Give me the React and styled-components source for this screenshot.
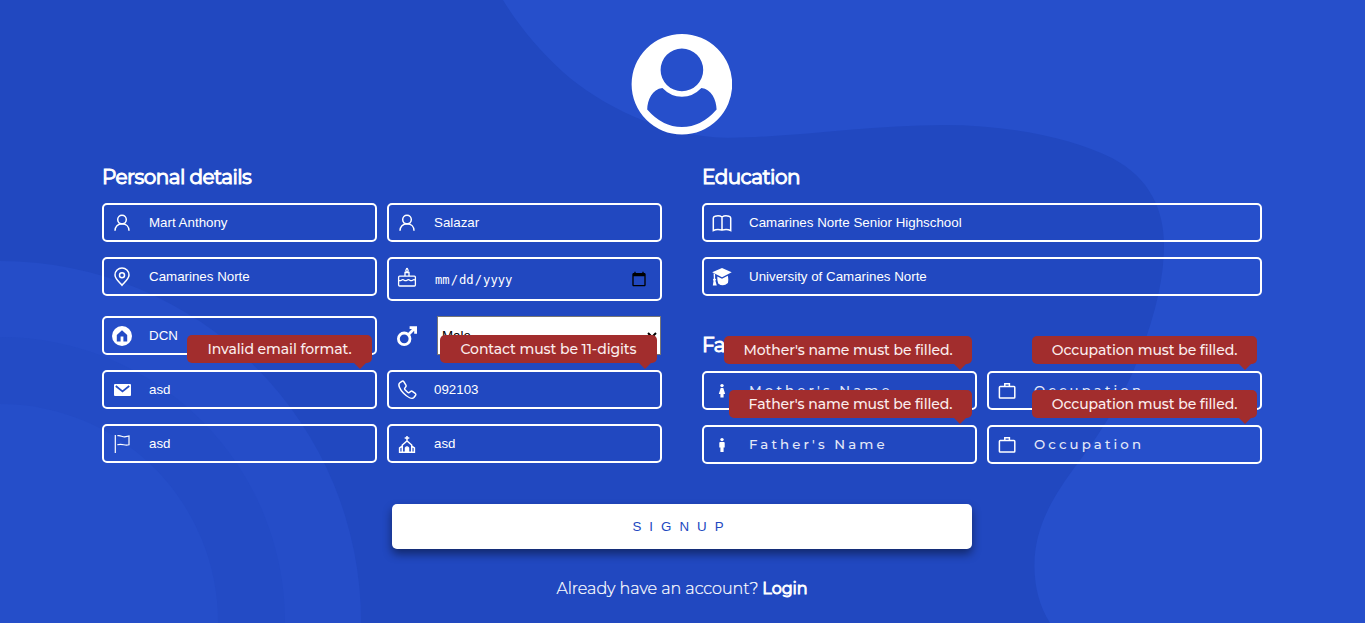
import React from "react";
import styled, { createGlobalStyle } from "styled-components";

const DISPLAY = `Montserrat, Inter, "Open Sans", sans-serif`;
const BODY = `"Liberation Sans", Arial, sans-serif`;

const GlobalStyle = createGlobalStyle`
  *, *::before, *::after { box-sizing: border-box; }
  html, body { margin: 0; padding: 0; background: #2148c0; }
  body { overflow: hidden; }
`;

const Page = styled.main`
  position: relative;
  isolation: isolate;
  height: 623px;
  padding: 34px 0 0 102px;
  overflow: hidden;
  color: #fff;
  font-family: ${DISPLAY};
`;

const Backdrop = styled.svg`
  position: absolute;
  inset: 0;
  z-index: -1;
`;

const Content = styled.form`
  display: flex;
  flex-direction: column;
  align-items: center;
  width: 1160px;
`;

const Avatar = styled.svg`
  display: block;
  width: 101px;
  height: 101px;
  margin-right: 1px;
`;

const Columns = styled.div`
  display: grid;
  grid-template-columns: 560px 560px;
  gap: 40px;
  align-self: stretch;
  margin-top: 28px;
`;

const Column = styled.section`
  display: flex;
  flex-direction: column;
`;

const Heading = styled.h2`
  margin: 0 0 13px;
  height: 27px;
  font-size: 20px;
  line-height: 28px;
  font-weight: 400;
  letter-spacing: -0.55px;
  -webkit-text-stroke: 1px #fff;
`;

const Rows = styled.div`
  display: flex;
  flex-direction: column;
  gap: 15px;
  margin-bottom: ${(p) => p.$below || 0}px;
`;

const Row = styled.div`
  display: grid;
  grid-auto-flow: column;
  grid-auto-columns: minmax(0, 1fr);
  align-items: start;
  gap: 10px;
`;

const Field = styled.label`
  position: relative;
  display: flex;
  gap: ${(p) => (p.$bare ? 20 : 17)}px;
  height: ${(p) => p.$height || 39}px;
  padding: 0 ${(p) => (p.$bare ? 0 : 8)}px 0 ${(p) => (p.$bare ? 10 : 8)}px;
  border: ${(p) => (p.$bare ? "0" : "2px solid #fff")};
  border-radius: 5px;
`;

const Icon = styled.svg`
  flex: none;
  width: 20px;
  height: 20px;
  margin-top: ${(p) => p.$top ?? 8}px;
  overflow: visible;
  fill: none;
  stroke: #fff;
  stroke-width: 1.5;
`;

const Input = styled.input`
  flex: 1;
  min-width: 0;
  height: 35px;
  padding: 0;
  border: 0;
  outline: 0;
  background: transparent;
  color: #fff;
  font: 13.333px ${BODY};
  &::placeholder {
    color: #e4e9f8;
    opacity: 1;
    font-family: ${DISPLAY};
    font-size: 13.333px;
    font-weight: 500;
    letter-spacing: 3.1px;
  }
`;

const DateInput = styled(Input)`
  height: 40px;
  padding: 2px 5px 0 0;
  font: 12.2px "DejaVu Sans Mono", monospace;
  &::-webkit-calendar-picker-indicator {
    width: 16px;
    height: 16px;
    margin-bottom: 2px;
    padding: 0;
    background-size: 16px 16px;
  }
`;

const Select = styled.select`
  flex: 1;
  height: 39px;
  margin-right: 1px;
  border-radius: 0;
  background: #fff;
  color: #000;
  font: 13.333px ${BODY};
`;

const Tooltip = styled.span`
  position: absolute;
  z-index: 2;
  right: 3px;
  top: -37px;
  width: ${(p) => p.$width}px;
  height: 28px;
  border-radius: 5px;
  background: #a22d2d;
  color: #fbeeee;
  font-size: 14px;
  line-height: 28px;
  font-weight: 500;
  letter-spacing: -0.08px;
  text-align: center;
  white-space: nowrap;
  &::after {
    content: "";
    position: absolute;
    right: 6px;
    top: 28px;
    border: 6px solid transparent;
    border-bottom: 0;
    border-top-color: #a22d2d;
  }
`;

const Submit = styled.button`
  width: 580px;
  height: 45px;
  margin-top: 40px;
  padding: 0 0 1px;
  border: 0;
  border-radius: 5px;
  background: #fff;
  color: #2148c0;
  font: 13.333px ${BODY};
  letter-spacing: 8px;
  box-shadow: 0 5px 10px rgba(0, 0, 0, 0.45);
`;

const Footer = styled.p`
  display: flex;
  gap: 4px;
  margin: 29px 0 0;
  font-size: 16px;
  line-height: 22px;
  font-weight: 300;
  letter-spacing: -0.03px;
  -webkit-text-stroke: 0.2px #fff;
`;

const Login = styled.a`
  font-weight: 400;
  -webkit-text-stroke: 0.9px #fff;
`;

const solid = { fill: "#fff", stroke: "none" };

const glyphs = {
  person: (
    <>
      <circle cx="10" cy="6.600" r="4.300" />
      <path d="M3 17.800c0-4.200 2.800-7 7-7s7 2.800 7 7" />
    </>
  ),
  pin: (
    <>
      <path d="M10 18.300C7.500 15.300 3 11.800 3 8a7 7 0 0 1 14 0c0 3.800-4.500 7.300-7 10.300Z" />
      <circle cx="10" cy="8.200" r="2.500" />
    </>
  ),
  cake: (
    <g strokeWidth="1.300">
      <rect x="1.600" y="9.200" width="16.800" height="9.800" rx="1" />
      <path d="M1.600 13.200q1.400 1 2.800 0t2.800 0 2.800 0 2.800 0 2.800 0 2.800 0M8 9V5.500h4V9M10 1q2.300 3.400 0 4.200-2.300-.8 0-4.200" />
    </g>
  ),
  home: (
    <>
      <circle cx="10" cy="10" r="10" {...solid} />
      <path d="M10 4.300 4.800 9v6.600h3.800v-5h2.800v5h3.800V9Z" fill="#234bc5" stroke="none" />
    </>
  ),
  mail: (
    <>
      <rect x="2" y="4" width="17" height="12" rx="1" {...solid} />
      <path d="m3.800 6 6.700 5.500L17.200 6" stroke="#244cc7" strokeWidth="1.700" />
    </>
  ),
  flag: (
    <g strokeWidth="1.200">
      <path d="M3.300 1v18M5.300 1.800c3-1.200 4.700 1.400 7.500 1.100l4.200-1v8.800c-4.800 1.600-6-1.700-11.700.1" />
    </g>
  ),
  male: (
    <g strokeWidth="2.800">
      <circle cx="7.200" cy="12.800" r="5.800" />
      <path d="m11.300 8.700 6.400-6.400M12.600 1.700h6v6" />
    </g>
  ),
  phone: (
    <path
      strokeLinejoin="round"
      d="M4.800 1.400 2.600 3C.8 4.600 2.600 9.200 6.600 13.200s8.400 6.200 10.300 4.300l1.700-2.200q.7-1-.4-2l-2.800-2q-.8-.5-1.600 0l-1.600 1.200q-.8.5-1.600-.2L8 9.700q-.8-.8-.2-1.600L8.900 6.600q.5-.7 0-1.500L6.800 1.700q-.9-1.200-2-.3Z"
    />
  ),
  church: (
    <g strokeWidth="1.500">
      <path d="M10 2v6M7.700 4h4.600M5.300 18V11L10 7l4.700 4v7M5.300 12.200 2.600 14v4.200h14.800V14l-2.700-1.800M8.500 18v-4q1.500-2 3 0v4M10 14v4" />
    </g>
  ),
  book: (
    <path d="M10 4Q7 2 3 3.300q-1.700.5-1.700 1.700v12.500q4-2 8.700-.4 4.700-1.600 8.700.4V5q0-1.200-1.700-1.700Q13 2 10 4v13" />
  ),
  cap: (
    <g {...solid}>
      <path d="M10 1 .2 5.300 10 10.200l9.700-4.900Z" />
      <path d="M5.300 9.400 10 11.700l5.800-2.900c.5 2.100.8 4.700.1 7.200Q11 20.500 6.200 16.400 5 13 5.300 9.400ZM1.600 6.300l1.500.7v4.400l1 1.200-.7 1.100 1.400 4.900H.8l.7-4.700-.6-1.300.9-1.200Z" />
    </g>
  ),
  woman: (
    <g {...solid}>
      <circle cx="10" cy="4.600" r="1.700" />
      <path d="M8.700 7h2.600l1.900 6h-1.600v3.600H8.400V13H6.800Z" />
    </g>
  ),
  man: (
    <g {...solid}>
      <circle cx="10" cy="4.600" r="1.700" />
      <path d="M8.200 7h3.600q.9 0 .9 1v4.600h-1.100v4.300H8.400v-4.300H7.300V8q0-1 .9-1Z" />
    </g>
  ),
  briefcase: (
    <>
      <rect x="2.400" y="5.600" width="15.400" height="11.400" rx=".8" />
      <path d="M7.800 5.500V2.700h4.600v2.800" />
    </>
  ),
};

function Glyph({ name, top }) {
  return (
    <Icon $top={top} viewBox="0 0 20 20" aria-hidden="true">
      {glyphs[name]}
    </Icon>
  );
}

function TextField({ icon, value, placeholder, error, width }) {
  return (
    <Field>
      <Glyph name={icon} />
      <Input defaultValue={value} placeholder={placeholder} />
      {error && <Tooltip $width={width}>{error}</Tooltip>}
    </Field>
  );
}

export default function App() {
  return (
    <Page>
      <GlobalStyle />
      <Backdrop width="1365" height="623" viewBox="0 0 1365 623" aria-hidden="true">
        <path
          fill="#264fcb"
          d="M503 0C518 25 540 51 563 72C600 105 663 137 727 137.700C790 138 865 125 944 125C1010 125 1072 138 1112 158C1150 178 1164 210 1164 245C1164 285 1152 325 1135 367C1121 401 1097 438 1078 463C1053 496 1034 528 1034.500 566C1034.500 588 1040 607 1050 623H1365V0Z"
        />
        <circle cx="0" cy="622" r="361" fill="#254dc8" />
        <circle cx="0" cy="622" r="285" fill="#234bc5" />
        <circle cx="0" cy="622" r="218" fill="#254ec9" />
      </Backdrop>
      <Content onSubmit={(e) => e.preventDefault()}>
        <Avatar viewBox="-0.4 0 101 101" aria-hidden="true">
          <path
            fill="#fff"
            fillRule="evenodd"
            d="M50.500 0a50.300 50.300 0 1 1 0 100.600a50.300 50.300 0 1 1 0-100.600ZM50.500 14.600a21.300 21.300 0 1 0 0 42.600a21.300 21.300 0 1 0 0-42.600ZM31 54C21 55 16 66 15.800 75.500Q31 93 50.500 93T85.200 75.500C85 66 80 55 70 54Q61.500 62.800 50.500 62.800T31 54Z"
          />
        </Avatar>
        <Columns>
          <Column>
            <Heading>Personal details</Heading>
            <Rows>
              <Row>
                <TextField icon="person" value="Mart Anthony" />
                <TextField icon="person" value="Salazar" />
              </Row>
              <Row>
                <TextField icon="pin" value="Camarines Norte" />
                <Field $height={44}>
                  <Glyph name="cake" />
                  <DateInput type="date" />
                </Field>
              </Row>
              <Row>
                <TextField icon="home" value="DCN" />
                <Field $bare>
                  <Glyph name="male" top={10} />
                  <Select defaultValue="Male">
                    <option>Male</option>
                    <option>Female</option>
                  </Select>
                </Field>
              </Row>
              <Row>
                <TextField icon="mail" value="asd" error="Invalid email format." width={185} />
                <TextField icon="phone" value="092103" error="Contact must be 11-digits" width={217} />
              </Row>
              <Row>
                <TextField icon="flag" value="asd" />
                <TextField icon="church" value="asd" />
              </Row>
            </Rows>
          </Column>
          <Column>
            <Heading>Education</Heading>
            <Rows $below={35}>
              <Row>
                <TextField icon="book" value="Camarines Norte Senior Highschool" />
              </Row>
              <Row>
                <TextField icon="cap" value="University of Camarines Norte" />
              </Row>
            </Rows>
            <Heading>Family</Heading>
            <Rows>
              <Row>
                <TextField icon="woman" placeholder="Mother's Name" error="Mother's name must be filled." width={248} />
                <TextField icon="briefcase" placeholder="Occupation" error="Occupation must be filled." width={225} />
              </Row>
              <Row>
                <TextField icon="man" placeholder="Father's Name" error="Father's name must be filled." width={243} />
                <TextField icon="briefcase" placeholder="Occupation" error="Occupation must be filled." width={225} />
              </Row>
            </Rows>
          </Column>
        </Columns>
        <Submit type="submit">SIGNUP</Submit>
        <Footer>
          <span>Already have an account?</span>
          <Login>Login</Login>
        </Footer>
      </Content>
    </Page>
  );
}
